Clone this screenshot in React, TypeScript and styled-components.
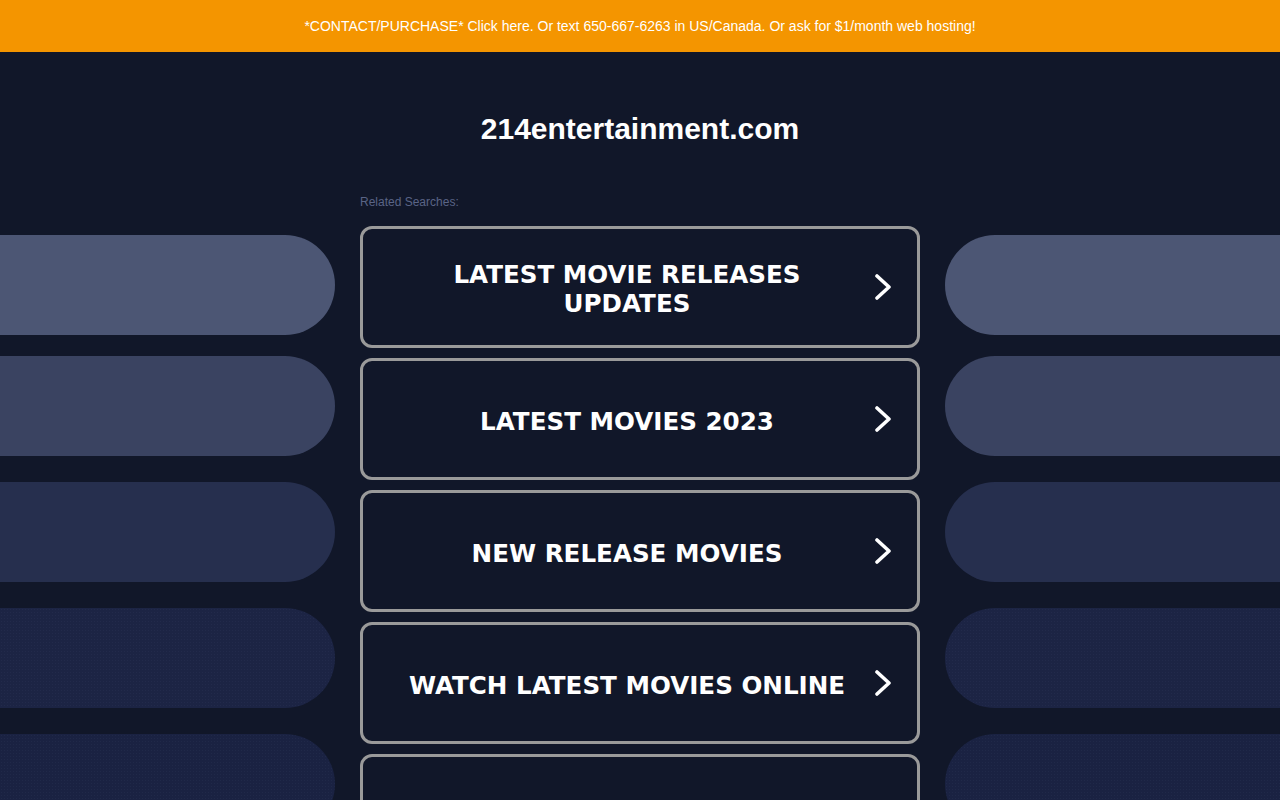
import React from "react";
import styled, { createGlobalStyle } from "styled-components";

const GlobalStyle = createGlobalStyle`
  html, body {
    margin: 0;
    padding: 0;
    background: #111729;
  }
  * {
    box-sizing: border-box;
  }
`;

const Banner = styled.div`
  height: 52px;
  background: #f49500;
  display: flex;
  align-items: center;
  justify-content: center;
  color: #ffffff;
  font-family: "Liberation Sans", Arial, sans-serif;
  font-size: 14px;
`;

const Page = styled.div`
  display: grid;
  grid-template-columns: 335px 560px 335px;
  column-gap: 25px;
  min-height: 748px;
  background: #111729;
`;

const SideColumn = styled.div`
  display: flex;
  flex-direction: column;
  padding-top: 183px;
`;

const Pill = styled.div<{ $side: "left" | "right"; $tone: string; $dotted?: boolean; $top: number }>`
  height: 100px;
  margin-top: ${(p) => p.$top}px;
  background-color: ${(p) => p.$tone};
  background-image: ${(p) =>
    p.$dotted
      ? "radial-gradient(rgba(120, 135, 180, 0.07) 0.6px, transparent 0.8px)"
      : "none"};
  background-size: 3px 3px;
  border-radius: ${(p) => (p.$side === "left" ? "0 50px 50px 0" : "50px 0 0 50px")};
`;

const Center = styled.div`
  display: flex;
  flex-direction: column;
  padding-top: 59px;
`;

const Title = styled.h1`
  margin: 0;
  text-align: center;
  color: #ffffff;
  font-family: "Liberation Sans", Arial, sans-serif;
  font-weight: 700;
  font-size: 30px;
  line-height: 36px;
`;

const Related = styled.div`
  margin-top: 48px;
  color: #5a6486;
  font-family: "Liberation Sans", Arial, sans-serif;
  font-size: 12px;
  line-height: 14px;
`;

const Results = styled.div`
  margin-top: 17px;
  display: flex;
  flex-direction: column;
  gap: 10px;
`;

const ResultLink = styled.a`
  height: 122px;
  display: flex;
  align-items: center;
  padding: 0 24px 0 26px;
  border: 3px solid #9a9a9a;
  border-radius: 12px;
  background: #111729;
  color: #ffffff;
  text-decoration: none;
  cursor: pointer;
`;

const ResultText = styled.span`
  flex: 1;
  padding: 4px 14px 0;
  text-align: center;
  font-family: "DejaVu Sans", Verdana, Tahoma, sans-serif;
  font-weight: 700;
  font-size: 24.6px;
  line-height: 29px;
`;

const Chevron = styled.svg`
  width: 20px;
  height: 26px;
  flex-shrink: 0;
  margin-left: 8px;
`;

const pills = [
  { tone: "#4c5674", top: 0 },
  { tone: "#3a4361", top: 21 },
  { tone: "#262f4e", top: 26 },
  { tone: "#1c2444", top: 26, dotted: true },
  { tone: "#1a2242", top: 26, dotted: true },
];

const searches = [
  "LATEST MOVIE RELEASES UPDATES",
  "LATEST MOVIES 2023",
  "NEW RELEASE MOVIES",
  "WATCH LATEST MOVIES ONLINE",
  "BEST MOVIES TO WATCH",
];

const ChevronIcon = () => (
  <Chevron viewBox="0 0 20 26">
    <polyline
      points="4,2 16,13 4,24"
      fill="none"
      stroke="#ffffff"
      strokeWidth="3.6"
      strokeLinecap="round"
      strokeLinejoin="round"
    />
  </Chevron>
);

const Side: React.FC<{ side: "left" | "right" }> = ({ side }) => (
  <SideColumn>
    {pills.map((p, i) => (
      <Pill key={i} $side={side} $tone={p.tone} $top={p.top} $dotted={p.dotted} />
    ))}
  </SideColumn>
);

export default function App() {
  return (
    <>
      <GlobalStyle />
      <Banner>
        *CONTACT/PURCHASE* Click here. Or text 650-667-6263 in US/Canada. Or ask for $1/month web hosting!
      </Banner>
      <Page>
        <Side side="left" />
        <Center>
          <Title>214entertainment.com</Title>
          <Related>Related Searches:</Related>
          <Results>
            {searches.map((s) => (
              <ResultLink key={s}>
                <ResultText>{s}</ResultText>
                <ChevronIcon />
              </ResultLink>
            ))}
          </Results>
        </Center>
        <Side side="right" />
      </Page>
    </>
  );
}
